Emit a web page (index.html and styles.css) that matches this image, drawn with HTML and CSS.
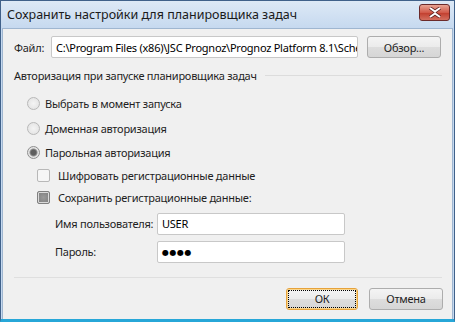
FILE: index.html
```html
<!DOCTYPE html>
<html lang="ru">
<head>
	<meta charset="UTF-8">
	<title>Сохранить настройки для планировщика задач</title>
	<link rel="stylesheet" href="styles.css">
</head>
<body>
	<div class="window">
		<div class="titlebar">
			<span class="title">Сохранить настройки для планировщика задач</span>
			<div class="close-btn">
				<svg width="16" height="11" viewBox="0 0 16 11">
					<path d="M3 1 L8 4.5 L13 1 M3 10 L8 6.5 L13 10" stroke="#5a2020" stroke-width="3.4" fill="none"/>
					<path d="M3 1 L8 4.5 L13 1 M3 10 L8 6.5 L13 10" stroke="#fff" stroke-width="2" fill="none"/>
				</svg>
			</div>
		</div>
		<div class="content">
			<div class="file-row">
				<label class="file-label">Файл:</label>
				<div class="textbox file-box">C:\Program Files (x86)\JSC Prognoz\Prognoz Platform 8.1\Scheduler</div>
				<button class="btn browse-btn">Обзор...</button>
			</div>

			<div class="group-head">
				<span>Авторизация при запуске планировщика задач</span>
				<div class="group-line"></div>
			</div>

			<div class="options">
				<div class="option radio-row">
					<span class="radio"></span>
					<span>Выбрать в момент запуска</span>
				</div>
				<div class="option radio-row">
					<span class="radio"></span>
					<span>Доменная авторизация</span>
				</div>
				<div class="option radio-row">
					<span class="radio checked"></span>
					<span>Парольная авторизация</span>
				</div>
			</div>

			<div class="checks">
				<div class="option check-row">
					<span class="checkbox"></span>
					<span>Шифровать регистрационные данные</span>
				</div>
				<div class="option check-row">
					<span class="checkbox indeterminate"></span>
					<span>Сохранить регистрационные данные:</span>
				</div>
			</div>

			<div class="cred-grid">
				<label>Имя пользователя:</label>
				<div class="textbox">USER</div>
				<label>Пароль:</label>
				<div class="textbox pass">●●●●</div>
			</div>

			<div class="separator"></div>

			<div class="footer">
				<button class="btn ok-btn"><span class="focus">ОК</span></button>
				<button class="btn">Отмена</button>
			</div>
		</div>
	</div>
</body>
</html>
```

FILE: styles.css
```css
body {
	margin: 0;
	font-family: "Noto Sans", "DejaVu Sans", sans-serif;
	font-size: 11px;
	letter-spacing: -0.25px;
	color: #1e1e1e;
	background: #fff;
}

.window {
	width: 455px;
	height: 322px;
	box-sizing: border-box;
	border: 1px solid #40618a;
	border-bottom: 3px solid #27a7d8;
	background: #c5d9f0;
	display: flex;
	flex-direction: column;
	padding: 0 1px;
}

.titlebar {
	flex-shrink: 0;
	height: 27px;
	display: flex;
	align-items: flex-start;
	justify-content: space-between;
	padding: 0 4px 0 6px;
	background: linear-gradient(#dde9f6, #c6d9ef);
	margin: 0 -1px;
}

.title {
	font-size: 12.5px;
	letter-spacing: 0;
	color: #1a1a1a;
	margin-top: 5px;
}

.close-btn {
	width: 31px;
	height: 17px;
	margin-top: 3px;
	border: 1px solid #6b2a2a;
	border-radius: 3px;
	background: linear-gradient(#e8a493, #d25a4a 50%, #c13c2c 51%, #d36f5f);
	display: flex;
	align-items: center;
	justify-content: center;
	box-sizing: border-box;
}

.content {
	flex: 1;
	background: #f0f0f0;
	border: 1px solid #9fb6d0;
	border-bottom: none;
	padding: 7px 10px 0 11px;
	display: flex;
	flex-direction: column;
}

.file-row {
	display: flex;
	align-items: center;
	height: 22px;
}

.file-label {
	width: 37px;
}

.textbox {
	height: 22px;
	box-sizing: border-box;
	border: 1px solid #c8c8c8;
	border-radius: 2px;
	background: #fff;
	padding: 0 4px;
	display: flex;
	align-items: center;
	white-space: nowrap;
	overflow: hidden;
	color: #000;
}

.file-box {
	width: 307px;
}

.btn {
	font-family: inherit;
	font-size: 11px;
	letter-spacing: -0.25px;
	color: #1e1e1e;
	height: 22px;
	width: 74px;
	border: 1px solid #adadad;
	border-radius: 3px;
	background: linear-gradient(#f4f4f4, #ebebeb 50%, #dddddd 51%, #d6d6d6);
	padding: 0;
}

.browse-btn {
	margin-left: 9px;
}

.group-head {
	display: flex;
	align-items: center;
	margin-top: 9px;
	height: 16px;
}

.group-line {
	flex: 1;
	height: 1px;
	background: #dcdcdc;
	margin-left: 8px;
}

.options {
	display: flex;
	flex-direction: column;
	margin-top: 8.5px;
}

.option {
	display: flex;
	align-items: center;
	height: 24.5px;
	white-space: nowrap;
}

.checks {
	display: flex;
	flex-direction: column;
	margin-top: -0.5px;
}

.check-row {
	height: 22px;
	padding-left: 21px;
}

.radio {
	width: 11px;
	height: 11px;
	border-radius: 50%;
	border: 1px solid #b8b8b8;
	background: radial-gradient(#f4f4f4, #e0e0e0);
	margin: 0 5px 0 13px;
	box-sizing: content-box;
}

.radio.checked {
	background: radial-gradient(#5e5e5e 0 2.5px, #8f8f8f 3.5px, #e4e4e4 4.5px);
	border-color: #8e8e8e;
}

.checkbox {
	width: 11px;
	height: 11px;
	border: 1px solid #b8b8b8;
	border-radius: 2px;
	background: #f6f6f6;
	margin: 0 8px 0 2px;
}

.checkbox.indeterminate {
	border-color: #808080;
	background: radial-gradient(#9a9a9a, #7c7c7c);
	box-shadow: inset 0 0 0 1px #dadada;
}

.cred-grid {
	display: grid;
	grid-template-columns: 102px 188px;
	row-gap: 6px;
	align-items: center;
	margin: 4px 0 0 41px;
	white-space: nowrap;
}

.pass {
	font-size: 8px;
	letter-spacing: 0.5px;
}

.separator {
	height: 1px;
	background: #dfdfdf;
	margin-top: 14px;
}

.footer {
	display: flex;
	justify-content: flex-end;
	gap: 11px;
	margin-top: 10px;
	margin-right: -1px;
}

.ok-btn {
	width: 72px;
	border-color: #e7a33b;
	box-shadow: inset 0 0 0 1px #fbd58a;
	padding: 2px;
}

.ok-btn .focus {
	display: flex;
	align-items: center;
	justify-content: center;
	height: 100%;
	outline: 1px dotted #000;
}
```
